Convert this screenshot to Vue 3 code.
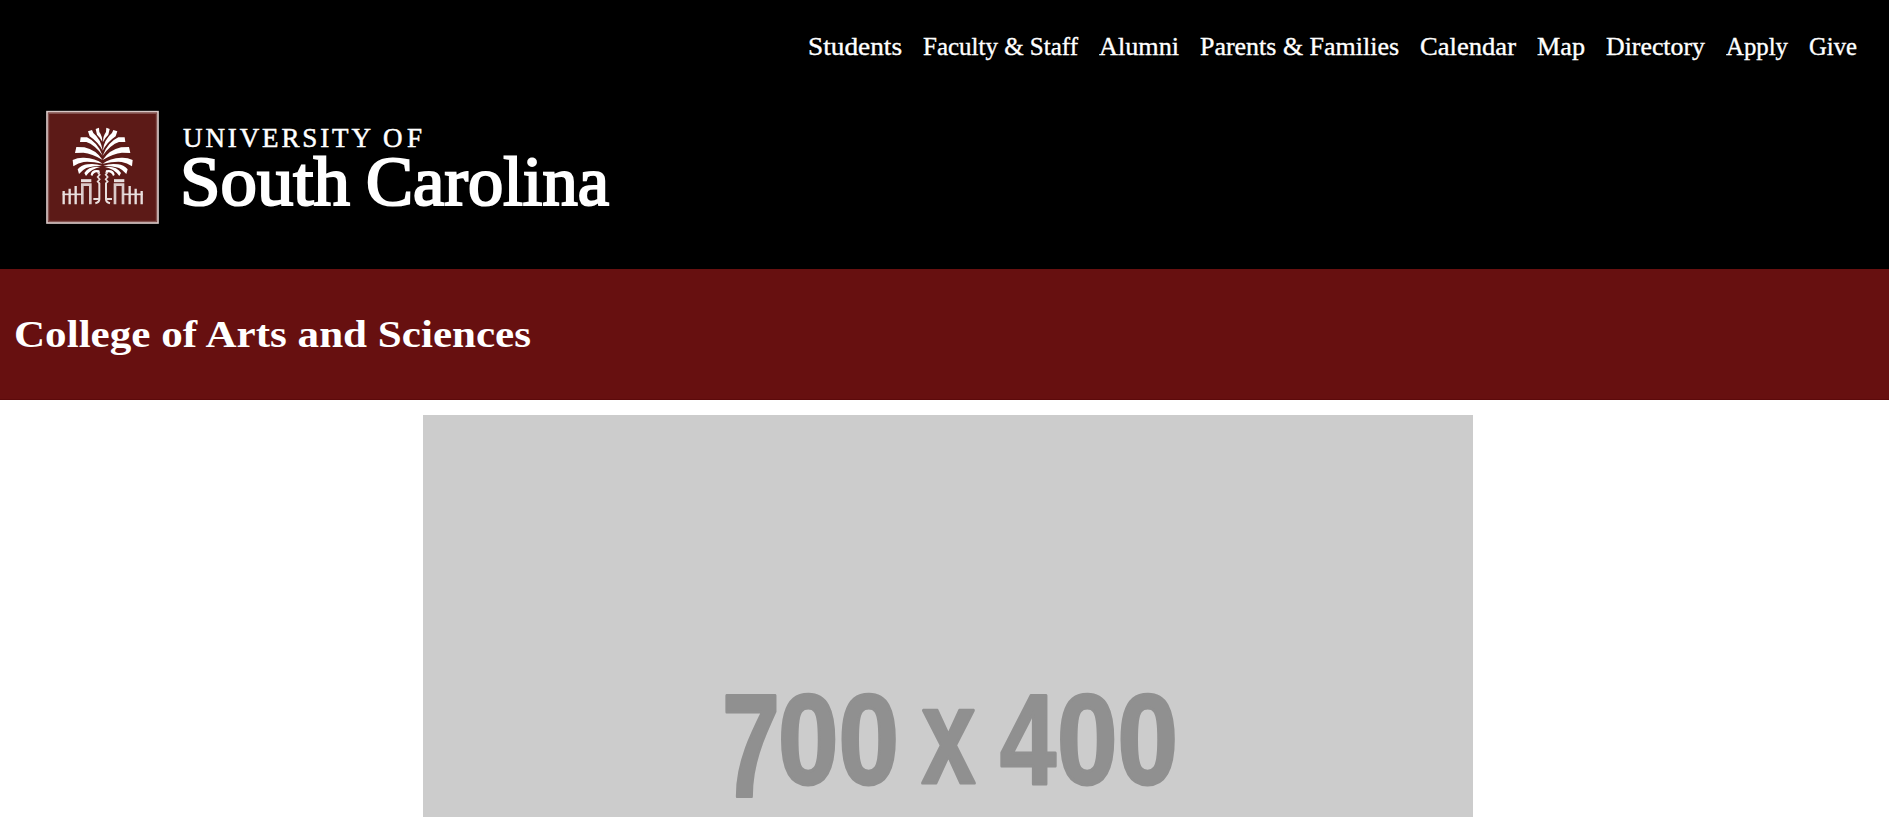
<script setup>
const links = [
  { label: 'Students', width: 95 },
  { label: 'Faculty & Staff', width: 156 },
  { label: 'Alumni', width: 81 },
  { label: 'Parents & Families', width: 200 },
  { label: 'Calendar', width: 97 },
  { label: 'Map', width: 49 },
  { label: 'Directory', width: 100 },
  { label: 'Apply', width: 63 },
  { label: 'Give', width: 49 },
]
</script>

<template>
  <div class="page">
    <header class="top">
      <nav class="nav">
        <a v-for="link in links" :key="link.label" class="nav-link">
          <svg :width="link.width" height="34">
            <text x="0" y="25.5" :textLength="link.width - 1" lengthAdjust="spacingAndGlyphs">{{ link.label }}</text>
          </svg>
        </a>
      </nav>
      <svg class="logo" width="600" height="135" viewBox="30 100 600 135">
        <g transform="translate(30 100) scale(.33333)">
          <rect x="51" y="35" width="333" height="334" fill="#5c1a17" stroke="#d8c8c7" stroke-width="5" />
          <rect x="56" y="40" width="323" height="324" fill="none" stroke="#8b5b59" stroke-width="3" />
          <g id="palm-half">
            <g fill="#fff">
              <path d="M197 87 L207 83 L208 96 Q217 108 217 126 Q211 113 201 104Z" />
              <path d="M174 94 L186 90 L190 99 Q213 118 218 152 Q205 127 179 109Z" />
              <path d="M152 112 L171 112 Q203 127 218 167 Q194 134 169 126 L150 126Z" />
              <path d="M139 141 L163 142 Q197 149 218 180 Q186 160 160 158 L135 159Z" />
              <path d="M128 180 Q144 172 162 173 Q196 174 218 191 Q183 184 161 186 Q145 188 130 199Z" />
              <path d="M143 208 Q155 195 172 193 Q196 190 216 197 Q184 198 169 204 Q158 209 147 222Z" />
              <path d="M163 219 Q178 196 211 201 Q184 206 168 228Z" />
              <path d="M182 225 Q184 207 208 211 L210 220 Q194 211 187 228Z" />
            </g>
            <g fill="none" stroke="#e9dfde">
              <path d="M203 217 L209 224 L203 231 L209 238 L203 245 L209 250" stroke-width="5" />
              <path d="M208 249 V298 Q208 307 196 310 M190 297 H207" stroke-width="6" />
              <path d="M153 242 H184" stroke-width="9" />
              <path d="M157 313 V254 H181 V313" stroke-width="8" stroke="#dbcac9" />
              <path d="M98 283 H157" stroke-width="5" />
              <path d="M101 273 V313 M119 266 V313 M137 258 V313" stroke-width="7" />
            </g>
          </g>
          <use href="#palm-half" transform="translate(436 0) scale(-1 1)" />
        </g>
        <g class="wordmark">
          <text class="small" x="183" y="147" textLength="188">UNIVERSITY</text>
          <text class="small" x="383" y="147" textLength="39">OF</text>
          <text class="large" x="180" y="205" textLength="170" lengthAdjust="spacingAndGlyphs">South</text>
          <text class="large" x="366" y="205" textLength="243" lengthAdjust="spacingAndGlyphs">Carolina</text>
        </g>
      </svg>
    </header>
    <section class="college">
      <h1>
        <svg width="530" height="60">
          <text x="-1" y="42" textLength="517" lengthAdjust="spacingAndGlyphs">College of Arts and Sciences</text>
        </svg>
      </h1>
    </section>
    <main class="content">
      <svg class="placeholder" width="1050" height="600" viewBox="423 415 1050 600">
        <text class="seven" x="722" y="796" textLength="58" lengthAdjust="spacingAndGlyphs">7</text>
        <text x="778" y="784" textLength="121" lengthAdjust="spacingAndGlyphs">00</text>
        <text class="times" x="921.5" y="783" textLength="54" lengthAdjust="spacingAndGlyphs">x</text>
        <text x="1000" y="784" textLength="56" lengthAdjust="spacingAndGlyphs">4</text>
        <text x="1057" y="784" textLength="121" lengthAdjust="spacingAndGlyphs">00</text>
      </svg>
    </main>
  </div>
</template>

<style>
html,
body {
  margin: 0;
  background: #fff;
  overflow: hidden;
}
</style>

<style scoped>
.page {
  height: 817px;
  overflow: hidden;
  font-family: Georgia, 'Liberation Serif', serif;
}
.top {
  box-sizing: border-box;
  height: 269px;
  padding-top: 29px;
  background: #000;
}
.nav {
  display: flex;
  justify-content: flex-end;
  gap: 20px;
  height: 71px;
  padding-right: 31px;
}
.nav-link svg,
.logo,
.placeholder,
h1 svg {
  display: block;
}
.nav-link text {
  fill: #fff;
  stroke: #fff;
  stroke-width: 0.35px;
  font-size: 25.5px;
}
.logo {
  margin-left: 30px;
}
.wordmark {
  fill: #fff;
  stroke: #fff;
}
.small {
  font-size: 27px;
  stroke-width: 0.5px;
}
.large {
  font-size: 70px;
  stroke-width: 2.2px;
}
.college {
  box-sizing: border-box;
  height: 131px;
  padding: 36px 15px 0;
  background: #671010;
  border-bottom: 1px solid #5c0a0b;
}
h1 {
  margin: 0;
  font-size: 38px;
  font-weight: bold;
}
h1 text {
  fill: #fff;
}
.content {
  padding: 15px 0 0 423px;
}
.placeholder {
  background: #ccc;
}
.placeholder text {
  fill: #909090;
  stroke: #909090;
  stroke-width: 3px;
  stroke-linejoin: round;
  font-family: 'Liberation Sans', Arial, sans-serif;
  font-size: 128px;
  font-weight: bold;
}
.placeholder .seven {
  font-size: 146px;
}
.placeholder .times {
  font-size: 137px;
}
</style>
